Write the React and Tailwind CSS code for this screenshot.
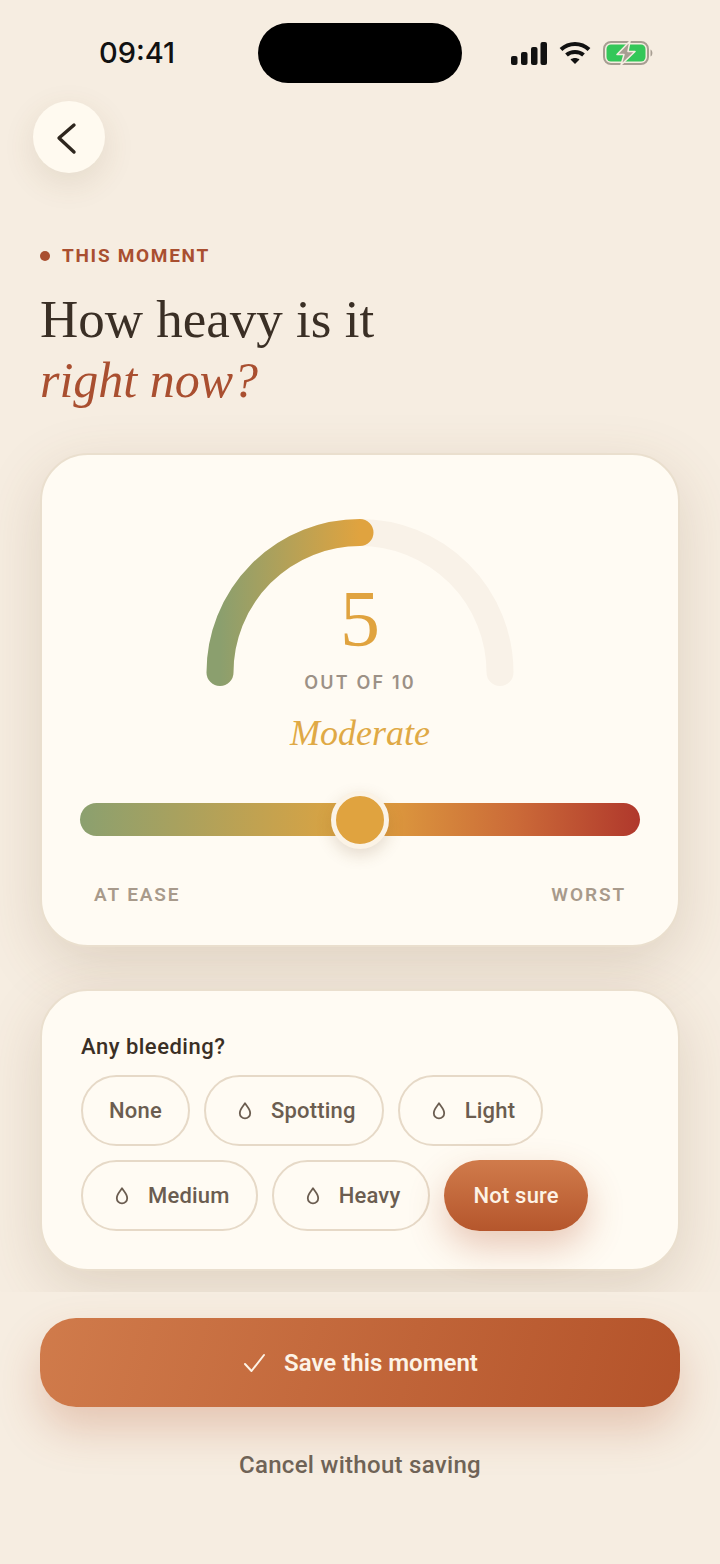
const SANS = "font-['Roboto','Noto_Sans',sans-serif]";

function Drop() {
  return (
    <svg width="16" height="20" viewBox="0 0 16 20" fill="none" stroke="#6b5d50" strokeWidth="1.8" className="shrink-0">
      <path d="M8 2.2 C 9.6 5 13.2 8 13.2 12.2 A 5.2 5.2 0 0 1 2.8 12.2 C 2.8 8 6.4 5 8 2.2 Z" strokeLinejoin="round" />
    </svg>
  );
}

function Chip({ label, icon, active, className = '' }) {
  if (active) {
    return (
      <div className="h-[71px] px-[29px] rounded-full flex items-center bg-gradient-to-b from-[#d07b4b] to-[#b5562c] text-[#fdf3e6] text-[22px] font-medium tracking-[0.2px] shadow-[0_16px_36px_rgba(180,85,45,0.3)]">
        {label}
      </div>
    );
  }
  return (
    <div className={`h-[71px] ${icon ? 'pl-[31px] pr-[26px] gap-[18px]' : 'px-[26px]'} rounded-full border-2 border-[#e6d9c7] flex items-center text-[#6b5d50] text-[22px] font-medium tracking-[0.2px] ${className}`}>
      {icon && <Drop />}
      {label}
    </div>
  );
}

function StatusBar() {
  return (
    <div className="h-[83px] pt-[23px] pl-[99px] pr-[67px] flex justify-between items-center shrink-0">
      <span className="w-[158px] text-[29px] font-medium text-[#111] font-['Inter',sans-serif]">09:41</span>
      <div className="w-[204px] h-[60px] rounded-[30px] bg-black shrink-0" />
      <div className="flex items-center gap-[12px] ml-[49px]">
        <svg width="36" height="23" viewBox="0 0 36 23" fill="#111">
          <rect x="0" y="14" width="6.5" height="9" rx="2" />
          <rect x="10" y="10" width="6.5" height="13" rx="2" />
          <rect x="20" y="5" width="6.5" height="18" rx="2" />
          <rect x="29.5" y="0" width="6.5" height="23" rx="2" />
        </svg>
        <svg width="32" height="24" viewBox="0 0 32 24" fill="none" stroke="#111" strokeWidth="4">
          <path d="M2 8.5 C 10 1, 22 1, 30 8.5" />
          <path d="M7.5 14 C 12 10, 20 10, 24.5 14" />
          <path d="M16 23 L 11.5 18.5 C 14 16.5, 18 16.5, 20.5 18.5 Z" fill="#111" stroke="none" />
        </svg>
        <svg width="50" height="24" viewBox="0 0 50 24" fill="none">
          <rect x="1" y="1" width="44" height="22" rx="7" stroke="#a79e92" strokeWidth="2" />
          <rect x="3.5" y="3.5" width="39" height="17" rx="4.5" fill="#34c759" />
          <path d="M47.5 8.5 C 50 9.5 50 14.5 47.5 15.5 Z" fill="#a79e92" />
          <path d="M27 0 L 14 13.5 H 21 L 18 24 L 32 10.5 H 25 Z" fill="#a79e92" stroke="#f6ede1" strokeWidth="1.5" strokeLinejoin="round" />
        </svg>
      </div>
    </div>
  );
}

function Gauge() {
  return (
    <svg width="310" height="170" viewBox="0 0 310 170" fill="none" className="block" strokeWidth="27" strokeLinecap="round">
      <defs>
        <linearGradient id="arc" gradientUnits="userSpaceOnUse" x1="15" y1="0" x2="155" y2="0">
          <stop offset="0" stopColor="#8b9f6e" />
          <stop offset="1" stopColor="#e0a33f" />
        </linearGradient>
      </defs>
      <path d="M15 153.5 A 140 140 0 0 1 295 153.5" stroke="#f9f2e8" />
      <path d="M15 153.5 A 140 140 0 0 1 155 13.5" stroke="url(#arc)" />
    </svg>
  );
}

export default function App() {
  return (
    <div className={`w-[720px] h-[1564px] bg-[#f6ede1] flex flex-col overflow-hidden ${SANS}`}>
      <div className="h-[1292px] shrink-0 overflow-hidden flex flex-col">
        <StatusBar />
        <div className="px-10 flex flex-col">
          {/* back button */}
          <div className="mt-[18px] -ml-[7px] w-[72px] h-[72px] rounded-full bg-[#fffaf0] flex items-center justify-center shadow-[0_10px_32px_rgba(110,80,40,0.12)]">
            <svg width="24" height="34" viewBox="0 0 24 34" fill="none" stroke="#2e261e" strokeWidth="3.4" strokeLinecap="round" strokeLinejoin="round" className="-ml-[6px] mt-[1px]">
              <path d="M20 4 L 5 17 L 20 31" />
            </svg>
          </div>

          <div className="mt-[71px] flex items-center gap-[12px] h-6">
            <div className="w-[10px] h-[10px] rounded-full bg-[#a94f30]" />
            <span className="text-[19px] font-bold tracking-[0.09em] text-[#a94f30]">THIS MOMENT</span>
          </div>

          <h1 className="mt-[21px] text-[53px] leading-[60px] font-normal text-[#3a2f25] font-['Liberation_Serif',serif]">
            How heavy is it
            <br />
            <em className="text-[50px] text-[#a94f30]">right now?</em>
          </h1>

          {/* severity card */}
          <div className="mt-[43px] h-[494px] rounded-[48px] border-2 border-[#eadfce] bg-[#fffbf3] shadow-[0_18px_58px_rgba(110,80,40,0.17)] px-[38px] flex flex-col shrink-0">
            <div className="mt-[64px] relative flex justify-center h-[170px]">
              <Gauge />
              <div className="absolute left-0 right-0 top-[56px] flex flex-col items-center">
                <span className="text-[80px] leading-[88px] text-[#e0a33f] font-['Liberation_Serif',serif]">5</span>
                <span className="mt-[8px] text-[18px] leading-6 font-semibold tracking-[0.12em] text-[#9c9186] font-['Inter',sans-serif]">OUT OF 10</span>
              </div>
            </div>
            <div className="mt-[22px] text-center italic text-[36px] leading-[44px] text-[#dfa945] font-['Liberation_Serif',serif]">Moderate</div>

            <div className="mt-[48px] relative h-[33px] rounded-full bg-[linear-gradient(90deg,#8ba06f_0%,#e0a33f_50%,#cb6a38_78%,#b0382c_100%)]">
              <div className="absolute left-1/2 top-1/2 -translate-x-1/2 -translate-y-1/2 w-[58px] h-[58px] rounded-full bg-[#e0a33f] border-[5px] border-[#fbf3e6] shadow-[0_6px_16px_rgba(110,80,40,0.18)]" />
            </div>
            <div className="mt-[47px] px-[14px] flex justify-between text-[19px] leading-6 font-semibold tracking-[0.1em] text-[#a89a8b]">
              <span>AT EASE</span>
              <span>WORST</span>
            </div>
          </div>

          {/* bleeding card */}
          <div className="mt-[42px] h-[282px] rounded-[48px] border-2 border-[#eadfce] bg-[#fffbf3] shadow-[0_18px_58px_rgba(110,80,40,0.17)] px-[39px] pt-[42px] shrink-0">
            <div className="text-[22px] leading-7 font-medium tracking-[0.5px] text-[#3a2f25]">Any bleeding?</div>
            <div className="mt-[14px] flex flex-wrap gap-[14px]">
              <Chip label="None" />
              <Chip label="Spotting" icon />
              <Chip label="Light" icon />
              <Chip label="Medium" icon />
              <Chip label="Heavy" icon className="pr-[28px]" />
              <Chip label="Not sure" active />
            </div>
          </div>
        </div>
      </div>

      {/* footer */}
      <div className="px-10 pt-[26px] flex flex-col">
        <div className="h-[89px] rounded-[36px] flex items-center justify-center gap-[18px] bg-[linear-gradient(105deg,#d07b4b,#b4532a)] shadow-[0_22px_44px_rgba(180,85,45,0.26)] text-[#fdf3e6] text-[24px] font-semibold">
          <svg width="24" height="24" viewBox="0 0 24 24" fill="none" stroke="#fdf3e6" strokeWidth="2" strokeLinecap="round" strokeLinejoin="round">
            <path d="M3 13 L 9.5 20 L 22 4" />
          </svg>
          Save this moment
        </div>
        <div className="mt-[42px] text-center text-[24px] leading-8 font-medium tracking-[0.3px] text-[#6f6356]">Cancel without saving</div>
      </div>
    </div>
  );
}
